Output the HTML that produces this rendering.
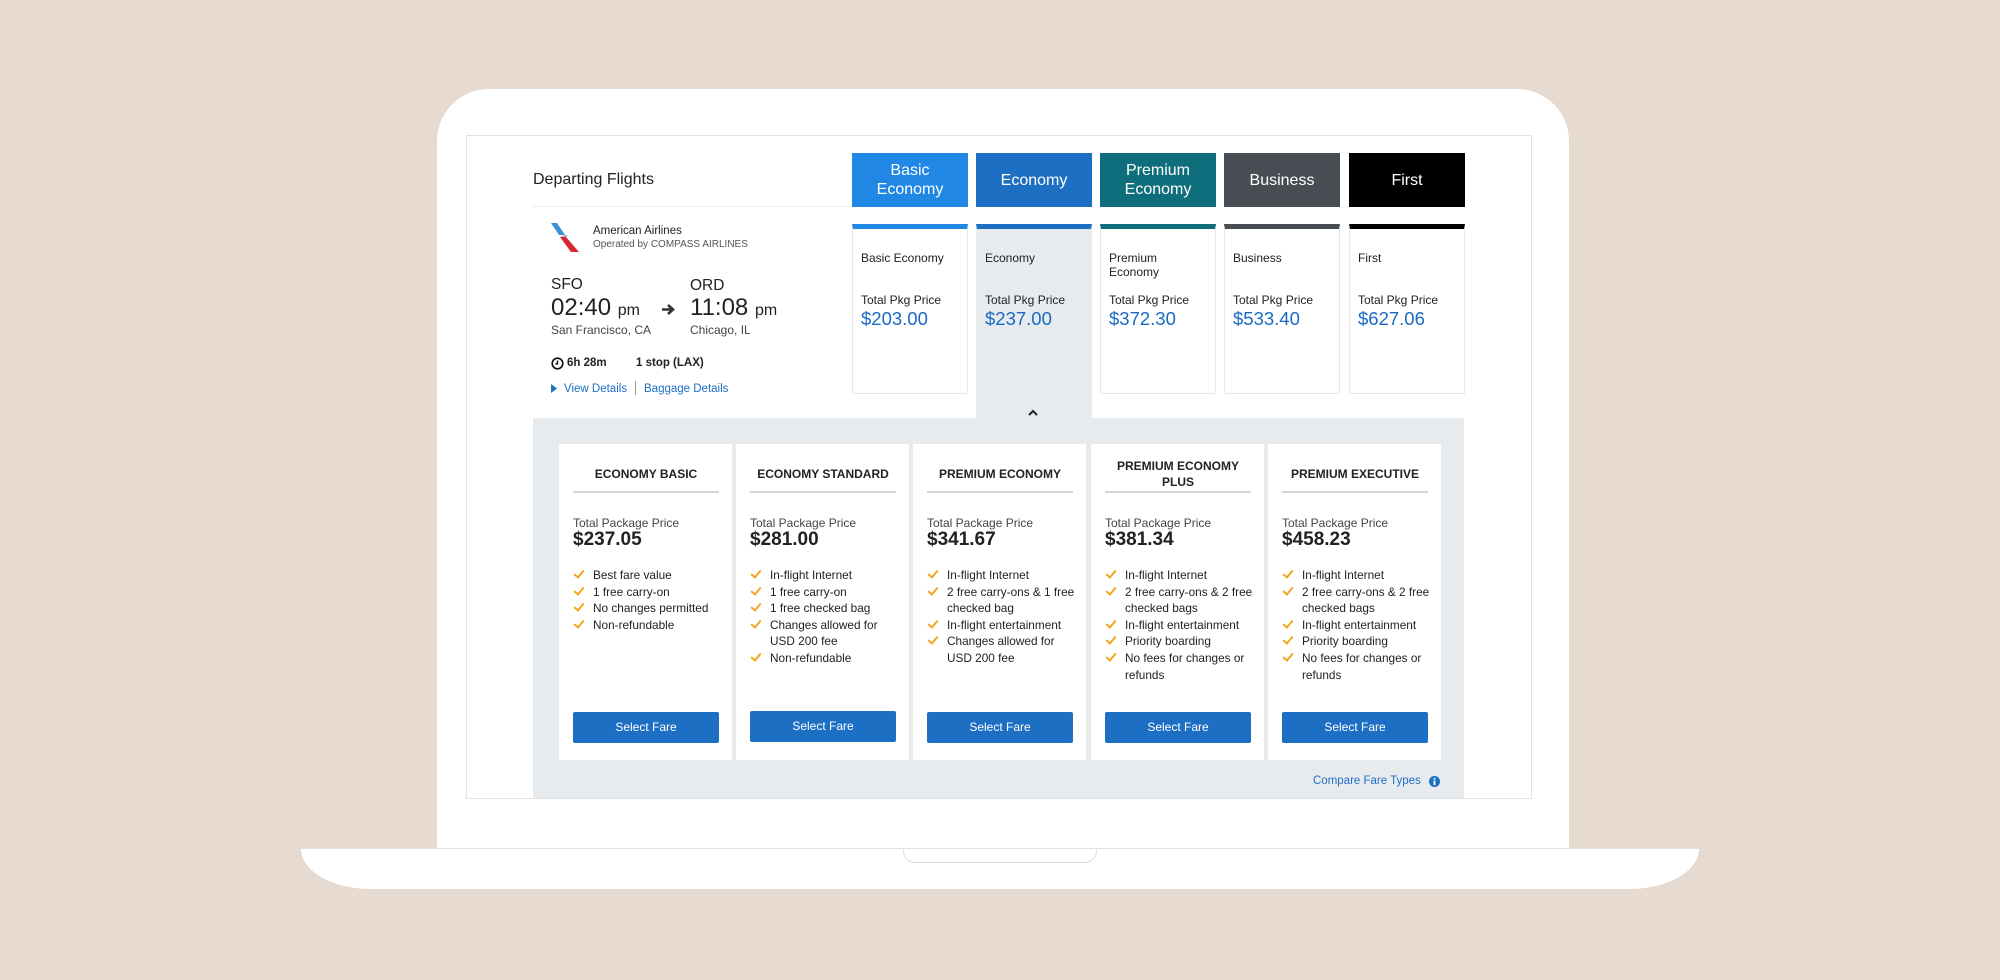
<!DOCTYPE html>
<html><head><meta charset="utf-8"><style>
*{margin:0;padding:0;box-sizing:border-box}
body{width:2000px;height:980px;background:#e6dad1;position:relative;overflow:hidden;font-family:"Liberation Sans",Arial,sans-serif;color:#222}
.a{position:absolute}
.lap{left:437px;top:89px;width:1132px;height:800px;background:#fff;border-radius:52px 52px 0 0}
.base{left:301px;top:848px;width:1398px;height:41px;background:#fff;border-top:1px solid #e2e2e2;border-radius:0 0 70px 70px/0 0 40px 40px}
.notch{left:903px;top:848px;width:194px;height:15px;border:1px solid #ddd;border-top:none;border-radius:0 0 12px 12px}
.scr{left:466px;top:135px;width:1066px;height:664px;border:1px solid #e3e3e3;background:#fff}
.tab{top:153px;width:116px;height:54px;color:#fff;font-size:16px;text-align:center;display:flex;align-items:center;justify-content:center;line-height:19px}
.card{top:224px;width:116px;height:170px;border:1px solid #e8e8e8;border-top:5px solid;background:#fff;padding:0 8px;font-size:12px}
.card .n{position:absolute;top:22px;left:8px;line-height:14px}
.card .t{position:absolute;top:64px;left:8px}
.card .p{position:absolute;top:79px;left:8px;font-size:18.5px;color:#1a6ac4}
.fc{top:444px;width:173px;height:316px;background:#fff}
.fc .h{position:absolute;left:14px;width:146px;top:12px;height:37px;border-bottom:2px solid #d6d6d6;font-weight:bold;font-size:12px;text-align:center;display:flex;align-items:center;justify-content:center;line-height:16px}
.fc .tp{position:absolute;left:14px;top:72px;font-size:12px;color:#444}
.fc .pr{position:absolute;left:14px;top:85px;font-size:19px;font-weight:bold}
.fc ul{position:absolute;left:14px;top:123px;width:150px;list-style:none;font-size:11.8px;line-height:16.6px}
.fc li{padding-left:20px;position:relative}
.fc li:before{content:"";position:absolute;left:3px;top:1px;width:4px;height:8px;border:solid #f3a51c;border-width:0 2.5px 2.5px 0;transform:rotate(40deg)}
.fc .b{position:absolute;left:14px;top:268px;width:146px;height:31px;background:#1d6fc4;color:#fff;font-size:12px;text-align:center;line-height:31px;border-radius:2px}
</style></head><body>
<div class="a lap"></div>
<div class="a base"></div>
<div class="a notch"></div>
<div class="a scr"></div>
<div class="a" style="left:533px;top:171px;font-size:16px">Departing Flights</div>
<div class="a" style="left:533px;top:206px;width:318px;height:1px;background:#eee"></div>
<div class="a tab" style="left:852px;background:#2088e4">Basic<br>Economy</div>
<div class="a tab" style="left:976px;background:#1d6fc4">Economy</div>
<div class="a tab" style="left:1100px;background:#0f6e7c">Premium<br>Economy</div>
<div class="a tab" style="left:1224px;background:#484d54">Business</div>
<div class="a tab" style="left:1349px;background:#000">First</div>
<div class="a" style="left:976px;top:224px;width:116px;height:200px;background:#e8ebee"></div>
<div class="a card" style="left:852px;border-top-color:#2088e4"><div class="n">Basic Economy</div><div class="t">Total Pkg Price</div><div class="p">$203.00</div></div>
<div class="a card" style="left:976px;border-top-color:#1d6fc4;background:#e8ebee;border-color:#1d6fc4 #e8ebee #e8ebee"><div class="n">Economy</div><div class="t">Total Pkg Price</div><div class="p">$237.00</div></div>
<div class="a card" style="left:1100px;border-top-color:#0f6e7c"><div class="n">Premium<br>Economy</div><div class="t">Total Pkg Price</div><div class="p">$372.30</div></div>
<div class="a card" style="left:1224px;border-top-color:#484d54"><div class="n">Business</div><div class="t">Total Pkg Price</div><div class="p">$533.40</div></div>
<div class="a card" style="left:1349px;border-top-color:#000"><div class="n">First</div><div class="t">Total Pkg Price</div><div class="p">$627.06</div></div>
<svg class="a" style="left:1027px;top:408px" width="12" height="10"><path d="M2 7 L6 3 L10 7" stroke="#222" stroke-width="2" fill="none"/></svg>
<svg class="a" style="left:551px;top:223px" width="30" height="29"><path d="M0 0 L6 0 L14 12 L8 12Z" fill="#3a8fd8"/><path d="M9 14 L15 14 L28 29 L20 29Z" fill="#d6262e"/><path d="M14 12 L17 12 L15 14 L9 14Z" fill="#aab"/></svg>
<div class="a" style="left:593px;top:225px;font-size:11.5px">American Airlines</div>
<div class="a" style="left:593px;top:239px;font-size:10px;color:#555">Operated by COMPASS AIRLINES</div>
<div class="a" style="left:551px;top:276px;font-size:15.5px">SFO</div>
<div class="a" style="left:551px;top:294px;font-size:24px">02:40 <span style="font-size:16px">pm</span></div>
<div class="a" style="left:551px;top:323px;font-size:12px;color:#444">San Francisco, CA</div>
<svg class="a" style="left:661px;top:302px" width="15" height="15"><path d="M1 7.5 H11 M7 3 L12 7.5 L7 12" stroke="#333" stroke-width="2.6" fill="none"/></svg>
<div class="a" style="left:690px;top:277px;font-size:15.5px">ORD</div>
<div class="a" style="left:690px;top:294px;font-size:24px">11:08 <span style="font-size:16px">pm</span></div>
<div class="a" style="left:690px;top:323px;font-size:12px;color:#444">Chicago, IL</div>
<svg class="a" style="left:551px;top:357px" width="13" height="13"><circle cx="6.5" cy="6.5" r="5.3" stroke="#111" stroke-width="1.6" fill="none"/><path d="M6.5 3.5 V6.8 H4.3" stroke="#111" stroke-width="1.4" fill="none"/></svg>
<div class="a" style="left:567px;top:357px;font-size:11.5px;font-weight:bold">6h 28m</div>
<div class="a" style="left:636px;top:357px;font-size:11.5px;font-weight:bold">1 stop (LAX)</div>
<svg class="a" style="left:551px;top:384px" width="7" height="9"><path d="M0 0 L6 4.5 L0 9Z" fill="#1d6fc4"/></svg>
<div class="a" style="left:564px;top:383px;font-size:11.5px;color:#1d6fc4">View Details</div>
<div class="a" style="left:635px;top:381px;width:1px;height:14px;background:#999"></div>
<div class="a" style="left:644px;top:383px;font-size:11.5px;color:#1d6fc4">Baggage Details</div>
<div class="a" style="left:533px;top:418px;width:931px;height:380px;background:#e8ebee"></div>
<div class="a fc" style="left:559px"><div class="h">ECONOMY BASIC</div><div class="tp">Total Package Price</div><div class="pr">$237.05</div><ul><li>Best fare value</li><li>1 free carry-on</li><li>No changes permitted</li><li>Non-refundable</li></ul><div class="b">Select Fare</div></div>
<div class="a fc" style="left:736px"><div class="h">ECONOMY STANDARD</div><div class="tp">Total Package Price</div><div class="pr">$281.00</div><ul><li>In-flight Internet</li><li>1 free carry-on</li><li>1 free checked bag</li><li>Changes allowed for USD 200 fee</li><li>Non-refundable</li></ul><div class="b" style="top:267px">Select Fare</div></div>
<div class="a fc" style="left:913px"><div class="h">PREMIUM ECONOMY</div><div class="tp">Total Package Price</div><div class="pr">$341.67</div><ul><li>In-flight Internet</li><li>2 free carry-ons &amp; 1 free checked bag</li><li>In-flight entertainment</li><li>Changes allowed for USD 200 fee</li></ul><div class="b">Select Fare</div></div>
<div class="a fc" style="left:1091px"><div class="h">PREMIUM ECONOMY<br>PLUS</div><div class="tp">Total Package Price</div><div class="pr">$381.34</div><ul><li>In-flight Internet</li><li>2 free carry-ons &amp; 2 free checked bags</li><li>In-flight entertainment</li><li>Priority boarding</li><li>No fees for changes or refunds</li></ul><div class="b">Select Fare</div></div>
<div class="a fc" style="left:1268px"><div class="h">PREMIUM EXECUTIVE</div><div class="tp">Total Package Price</div><div class="pr">$458.23</div><ul><li>In-flight Internet</li><li>2 free carry-ons &amp; 2 free checked bags</li><li>In-flight entertainment</li><li>Priority boarding</li><li>No fees for changes or refunds</li></ul><div class="b">Select Fare</div></div>
<div class="a" style="left:1313px;top:775px;font-size:11.5px;color:#1d6fc4">Compare Fare Types</div>
<svg class="a" style="left:1429px;top:776px" width="11" height="11"><circle cx="5.5" cy="5.5" r="5.5" fill="#1d6fc4"/><rect x="4.6" y="4.5" width="1.8" height="4.5" fill="#fff"/><circle cx="5.5" cy="2.8" r="1" fill="#fff"/></svg>
</body></html>
